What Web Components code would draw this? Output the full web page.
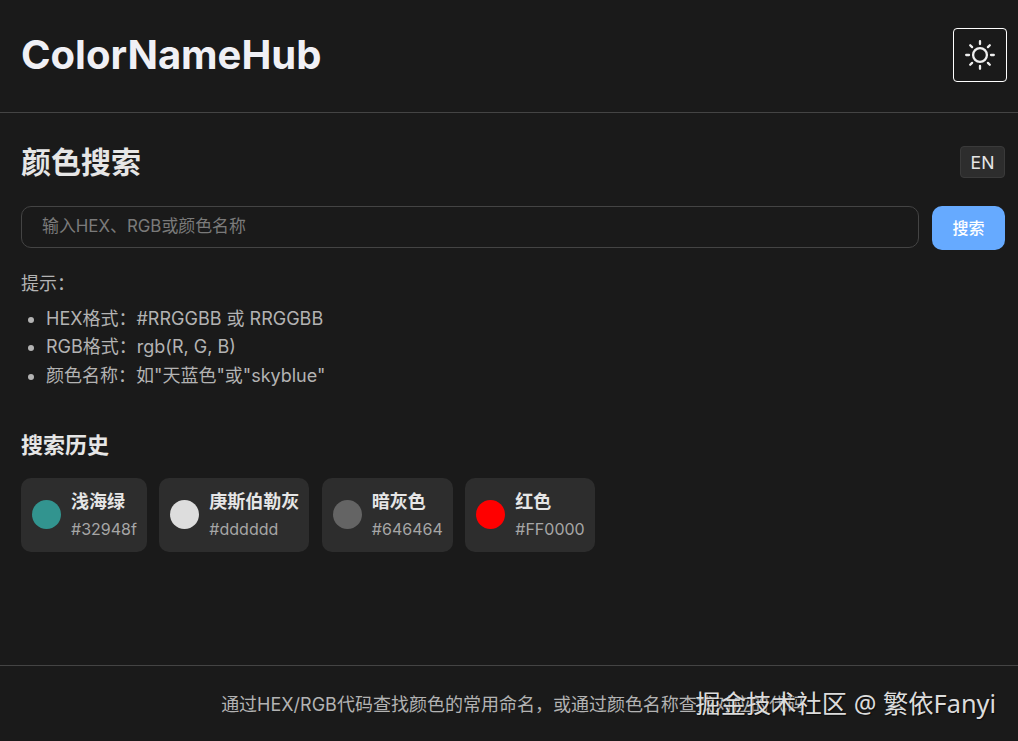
<!DOCTYPE html>
<html lang="zh">
<head>
<meta charset="utf-8">
<title>ColorNameHub</title>
<style>
  html, body { margin: 0; height: 100%; background: #1a1a1a; }
  body { font-family: Inter, "Noto Sans CJK SC", sans-serif; color: #e6e6e6; }
</style>
</head>
<body>
<app-shell>
  <app-header slot="header" title="ColorNameHub"></app-header>
  <search-panel></search-panel>
  <app-footer slot="footer">通过HEX/RGB代码查找颜色的常用命名，或通过颜色名称查找对应的代码</app-footer>
</app-shell>
<water-mark>掘金技术社区 @ 繁依Fanyi</water-mark>

<script>
class AppShell extends HTMLElement {
  constructor() {
    super();
    this.attachShadow({ mode: "open" });
    this.shadowRoot.innerHTML = `
      <style>
        :host { display: flex; flex-direction: column; height: 741px; overflow: hidden; }
        main { flex: 1; min-height: 0; }
      </style>
      <slot name="header"></slot>
      <main><slot></slot></main>
      <slot name="footer"></slot>
    `;
  }
}

class AppHeader extends HTMLElement {
  constructor() {
    super();
    this.attachShadow({ mode: "open" });
  }
  connectedCallback() {
    this.shadowRoot.innerHTML = `
      <style>
        :host {
          display: flex;
          align-items: center;
          justify-content: space-between;
          box-sizing: border-box;
          height: 113px;
          padding: 0 11px 3px 21px;
          border-bottom: 1px solid #444;
        }
        h1 { margin: 0; font-size: 40px; font-weight: 700; color: #f0f0f5; line-height: 1; }
        button {
          display: flex;
          align-items: center;
          justify-content: center;
          width: 54px;
          height: 54px;
          padding: 0;
          background: #1a1a1a;
          border: 1px solid #fff;
          border-radius: 4px;
        }
      </style>
      <h1>${this.getAttribute("title")}</h1>
      <button aria-label="theme">
        <svg width="32" height="32" viewBox="0 0 32 32" fill="none" stroke="#eee" stroke-width="2.3" stroke-linecap="round">
          <circle cx="16" cy="16" r="6.9"/>
          <path d="M16 2.2v2.8M16 27v2.8M2.2 16h2.8M27 16h2.8M6.2 6.2l1.9 1.9M23.9 23.9l1.9 1.9M6.2 25.8l1.9-1.9M23.9 8.1l1.9-1.9"/>
        </svg>
      </button>
    `;
  }
}

class SearchPanel extends HTMLElement {
  constructor() {
    super();
    this.attachShadow({ mode: "open" });
    this.shadowRoot.innerHTML = `
      <style>
        :host { display: block; padding: 33px 13px 0 21px; }
        .top { display: flex; justify-content: space-between; align-items: center; height: 32px; }
        h2 { margin: 0; font-size: 30px; font-weight: 700; color: #e6e6e6; line-height: 32px; }
        .lang {
          width: 45px;
          height: 32px;
          padding: 0;
          font: 17.6px Inter, "Noto Sans CJK SC", sans-serif;
          color: #e6e6e6;
          background: #2d2d2d;
          border: 1px solid #3a3a3a;
          border-radius: 4px;
        }
        .bar { display: flex; gap: 13px; margin-top: 28px; align-items: flex-start; }
        input {
          flex: 1;
          min-width: 0;
          box-sizing: border-box;
          height: 42px;
          padding: 0 20px 2px;
          font: 16.9px Inter, "Noto Sans CJK SC", sans-serif;
          color: #e6e6e6;
          background: #1a1a1a;
          border: 1px solid #444;
          border-radius: 10px;
          outline: none;
        }
        input::placeholder { color: #7a7a7a; opacity: 1; }
        .go {
          width: 73px;
          height: 44px;
          padding: 0 0 2px;
          font: 500 16px Inter, "Noto Sans CJK SC", sans-serif;
          color: #fff;
          background: #66aaff;
          border: 0;
          border-radius: 10px;
        }
        .tips { margin-top: 22px; font-size: 18px; line-height: 24px; color: #b3b3b3; }
        ul { margin: 8.5px 0 0; padding: 0 0 0 25px; line-height: 28.5px; }
        h3 { margin: 39.5px 0 0; font-size: 22px; font-weight: 700; line-height: 30px; color: #e6e6e6; }
        .history { display: flex; gap: 12.5px; margin-top: 18px; }
      </style>
      <div class="top">
        <h2>颜色搜索</h2>
        <button class="lang">EN</button>
      </div>
      <div class="bar">
        <input type="text" placeholder="输入HEX、RGB或颜色名称">
        <button class="go">搜索</button>
      </div>
      <div class="tips">
        提示：
        <ul>
          <li>HEX格式：#RRGGBB 或 RRGGBB</li>
          <li>RGB格式：rgb(R, G, B)</li>
          <li>颜色名称：如"天蓝色"或"skyblue"</li>
        </ul>
      </div>
      <h3>搜索历史</h3>
      <div class="history">
        <history-card name="浅海绿" code="#32948f"></history-card>
        <history-card name="庚斯伯勒灰" code="#dddddd"></history-card>
        <history-card name="暗灰色" code="#646464"></history-card>
        <history-card name="红色" code="#FF0000"></history-card>
      </div>
    `;
  }
}

class HistoryCard extends HTMLElement {
  constructor() {
    super();
    this.attachShadow({ mode: "open" });
  }
  connectedCallback() {
    const code = this.getAttribute("code");
    this.shadowRoot.innerHTML = `
      <style>
        :host {
          display: flex;
          align-items: center;
          gap: 10px;
          height: 74px;
          box-sizing: border-box;
          padding: 0 10px 0 11px;
          background: #2d2d2d;
          border-radius: 10px;
        }
        .dot { width: 29px; height: 29px; border-radius: 50%; background: ${code}; }
        .name { padding-top: 1px; font-size: 18px; font-weight: 700; line-height: 26px; color: #e6e6e6; }
        .code { margin-top: 2px; font-size: 16px; line-height: 24px; color: #a6a6a6; }
      </style>
      <div class="dot"></div>
      <div>
        <div class="name">${this.getAttribute("name")}</div>
        <div class="code">${code}</div>
      </div>
    `;
  }
}

class AppFooter extends HTMLElement {
  constructor() {
    super();
    this.attachShadow({ mode: "open" });
    this.shadowRoot.innerHTML = `
      <style>
        :host {
          display: flex;
          align-items: center;
          justify-content: center;
          box-sizing: border-box;
          height: 76px;
          padding: 0 0 2px 8px;
          border-top: 1px solid #444;
          font-size: 18px;
          color: #b3b3b3;
        }
      </style>
      <slot></slot>
    `;
  }
}

class WaterMark extends HTMLElement {
  constructor() {
    super();
    this.attachShadow({ mode: "open" });
    this.shadowRoot.innerHTML = `
      <style>
        :host {
          position: absolute;
          right: 22px;
          top: 684px;
          font-family: "Noto Sans", "Noto Sans CJK SC", sans-serif;
          font-size: 25.3px;
          line-height: 38px;
          color: #dcdcdc;
          text-shadow: 1px 1px 1px rgba(0, 0, 0, 0.6);
          white-space: nowrap;
        }
      </style>
      <slot></slot>
    `;
  }
}

customElements.define("app-shell", AppShell);
customElements.define("app-header", AppHeader);
customElements.define("search-panel", SearchPanel);
customElements.define("history-card", HistoryCard);
customElements.define("app-footer", AppFooter);
customElements.define("water-mark", WaterMark);
</script>
</body>
</html>
